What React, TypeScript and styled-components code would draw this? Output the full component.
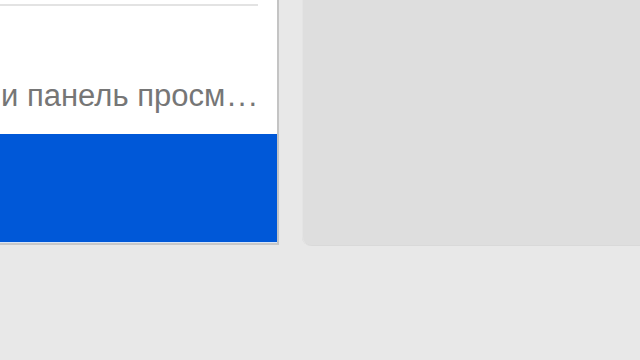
import React from "react";
import styled, { createGlobalStyle } from "styled-components";

const GlobalStyle = createGlobalStyle`
  html, body {
    margin: 0;
    padding: 0;
    background: #e8e8e8;
    overflow: hidden;
  }
`;

const Screen = styled.div`
  width: 640px;
  height: 360px;
  display: flex;
  align-items: flex-start;
  gap: 23px;
  background: #e8e8e8;
  font-family: "Liberation Sans", Arial, sans-serif;
`;

const ListPanel = styled.div`
  width: 277px;
  height: 243px;
  display: flex;
  flex-direction: column;
  background: #ffffff;
  border-right: 2px solid #c4c4c4;
  border-bottom: 2px solid #c8c8c8;
  box-sizing: content-box;
`;

const Separator = styled.div`
  margin-top: 4px;
  width: 258px;
  height: 2px;
  background: #e3e3e3;
`;

const Caption = styled.div`
  margin-top: 72px;
  padding-left: 1px;
  font-size: 31px;
  line-height: 36px;
  color: #767676;
  white-space: nowrap;
`;

const Dots = styled.span`
  margin-left: 2px;
  letter-spacing: 2px;
`;

const SelectedRow = styled.div`
  margin-top: 20px;
  height: 110px;
  background: #0058d8;
  border-bottom: 1px solid #d8e4f6;
`;

const PreviewPanel = styled.div`
  flex: 1;
  height: 246px;
  background: #dedede;
  border-bottom-left-radius: 9px;
  box-shadow: inset 1px 0 0 #e4e4e4, inset 0 -1px 0 #d9d9d9;
`;

export default function App() {
  return (
    <>
      <GlobalStyle />
      <Screen>
        <ListPanel>
          <Separator />
          <Caption>
            и панель просм<Dots>...</Dots>
          </Caption>
          <SelectedRow />
        </ListPanel>
        <PreviewPanel />
      </Screen>
    </>
  );
}
